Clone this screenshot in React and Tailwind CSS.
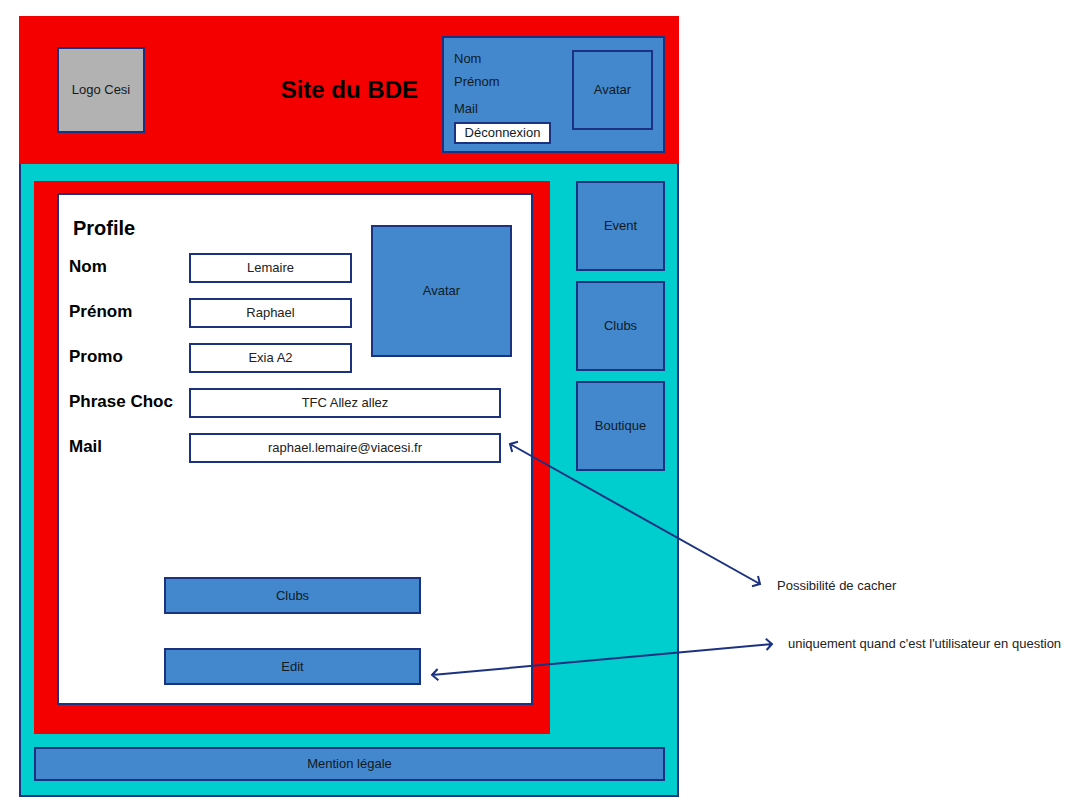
const topFields = [
  { id: "nom", label: "Nom", value: "Lemaire" },
  { id: "prenom", label: "Prénom", value: "Raphael" },
  { id: "promo", label: "Promo", value: "Exia A2" },
];

const wideFields = [
  { id: "phrase", label: "Phrase Choc", value: "TFC Allez allez" },
  { id: "mail", label: "Mail", value: "raphael.lemaire@viacesi.fr", type: "email" },
];

const links = ["Event", "Clubs", "Boutique"];

function Field({ id, label, value, type = "text" }) {
  return (
    <div className="flex items-center">
      <label htmlFor={id} className="w-[120px] shrink-0 pb-0.5 text-[17px] leading-6 font-bold text-black">
        {label}
      </label>
      <input
        id={id}
        type={type}
        defaultValue={value}
        className="h-[30px] min-w-0 flex-1 border-2 border-[#1b3281] bg-white pb-0.5 text-center text-[13px] text-[#222222]"
      />
    </div>
  );
}

function Header() {
  return (
    <header className="flex items-center bg-[#f50000] py-[11px] pr-3.5 pl-[38px]">
      <div className="flex h-[86px] w-[88px] shrink-0 items-center justify-center border-2 border-[#1b3281] bg-[#b2b2b2]">
        Logo Cesi
      </div>
      <h1 className="mr-6 ml-auto text-2xl font-bold whitespace-nowrap text-black">Site du BDE</h1>
      <section className="mt-[9px] flex w-[223px] shrink-0 items-start justify-between border-2 border-[#1b3281] bg-[#4388cc] px-2.5 pt-3 pb-[7px] leading-[18px]">
        <div>
          <p>Nom</p>
          <p className="mt-[5px]">Prénom</p>
          <p className="mt-[9px]">Mail</p>
          <button
            type="button"
            className="mt-1 flex h-[22px] w-[97px] items-center justify-center border-2 border-[#1b3281] bg-white"
          >
            Déconnexion
          </button>
        </div>
        <div className="flex h-20 w-[81px] items-center justify-center border-2 border-[#1b3281]">
          Avatar
        </div>
      </section>
    </header>
  );
}

function Profile() {
  return (
    <main className="min-w-0 flex-1 bg-[#f50000] pt-3 pr-[17px] pb-[29px] pl-[23px]">
      <form className="border-2 border-[#1b3281] bg-white pt-[21px] pb-[18px]">
        <div className="flex items-start gap-[19px] pr-[19px] pl-2.5">
          <div className="min-w-0 flex-1">
            <h2 className="ml-1 text-xl leading-6 font-bold text-black">Profile</h2>
            <div className="mt-[13px] flex flex-col gap-[15px]">
              {topFields.map((field) => (
                <Field key={field.id} {...field} />
              ))}
            </div>
          </div>
          <div className="mt-[9px] flex h-[132px] w-[141px] shrink-0 items-center justify-center border-2 border-[#1b3281] bg-[#4388cc]">
            Avatar
          </div>
        </div>
        <div className="mt-[15px] flex flex-col gap-[15px] pr-[30px] pl-2.5">
          {wideFields.map((field) => (
            <Field key={field.id} {...field} />
          ))}
        </div>
        <div className="mt-[114px] flex flex-col gap-[34px] pr-[110px] pl-[105px]">
          <button type="button" className="h-[37px] border-2 border-[#1b3281] bg-[#4388cc]">
            Clubs
          </button>
          <button type="button" className="h-[37px] border-2 border-[#1b3281] bg-[#4388cc]">
            Edit
          </button>
        </div>
      </form>
    </main>
  );
}

function Arrows() {
  return (
    <svg
      className="pointer-events-none absolute top-[414px] -left-[259px]"
      width="360"
      height="260"
      viewBox="420 430 360 260"
      fill="none"
      stroke="#1b3281"
      strokeWidth="2"
      aria-hidden="true"
    >
      <path d="M510 444 L760 584 M518 441.8 L510 444 L512.2 452 M758 576 L760 584 L752 586.2" />
      <path d="M432 675 L772 644 M437.6 669 L432 675 L438.4 680.2 M765.8 638.8 L772 644 L766.6 650" />
    </svg>
  );
}

export default function App() {
  return (
    <div className="flex items-start bg-white pt-4 pb-[11px] pl-[19px] font-['Liberation_Sans',Arial,sans-serif] text-[13px] leading-5 text-[#111a24]">
      <div className="min-w-[600px] flex-1">
        <Header />
        <div className="border-x-2 border-b-2 border-[#1b3281] bg-[#00cdcd] pt-[17px] pr-3 pb-3.5 pl-[13px]">
          <div className="flex items-start gap-[26px]">
            <Profile />
            <nav className="flex w-[89px] shrink-0 flex-col gap-2.5">
              {links.map((name) => (
                <a
                  key={name}
                  href="#"
                  className="flex h-[90px] items-center justify-center border-2 border-[#1b3281] bg-[#4388cc]"
                >
                  {name}
                </a>
              ))}
            </nav>
          </div>
          <footer className="mt-[13px] flex h-[34px] items-center justify-center border-2 border-[#1b3281] bg-[#4388cc]">
            <a href="#">Mention légale</a>
          </footer>
        </div>
      </div>
      <aside className="relative w-[391px] shrink-0 pt-[560px] pl-[98px] whitespace-nowrap text-[#222222]">
        <Arrows />
        <p>Possibilité de cacher</p>
        <p className="mt-[38px] ml-[11px]">uniquement quand c'est l'utilisateur en question</p>
      </aside>
    </div>
  );
}
